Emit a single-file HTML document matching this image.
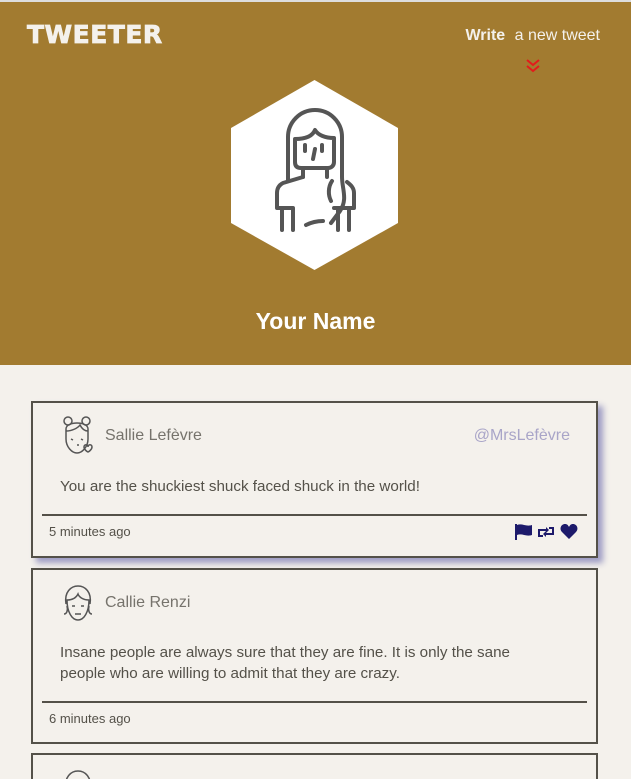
<!DOCTYPE html>
<html><head><style>
html,body{margin:0;width:631px;height:779px;overflow:hidden}
body{background:#f4f1ec;font-family:"Liberation Sans",sans-serif;color:#545149;position:relative}
.hdr{position:absolute;left:0;top:0;width:631px;height:365px;background:#a27b30;border-top:2px solid #ddd;box-sizing:border-box}
.logo{position:absolute;left:27px;top:18px;font:900 25px "DejaVu Sans",sans-serif;color:#f4f1ec;letter-spacing:0.5px;-webkit-text-stroke:0.8px #f4f1ec}
.write{position:absolute;right:31px;top:25px;font-size:16px;color:#f4f1ec}
.write b{margin-right:5px}
.name{position:absolute;left:0;width:631px;text-align:center;top:308px;font-size:23px;font-weight:bold;color:#fff}
.card{position:absolute;left:31px;width:567px;border:2px solid #545149;box-sizing:border-box;background:#f4f1ec}
.c1{top:401px;height:157px;box-shadow:5px 5px 6px #9d9cc4}
.c2{top:568px;height:176px}
.c3{top:753px;height:40px;border-bottom:none}
.uname{position:absolute;left:72px;top:24px;font-size:16px;color:#76736c}
.handle{position:absolute;right:26px;top:24px;font-size:16px;color:#a9a5c8}
.txt{position:absolute;left:27px;width:495px;font-size:15.2px;line-height:21px;color:#545149}
.line{position:absolute;left:9px;right:9px;height:2px;background:#545149}
.time{position:absolute;left:16px;font-size:13px;color:#545149}
</style></head><body>
<div class="hdr">
<div class="logo">TWEETER</div>
<div class="write"><b>Write</b> a new tweet</div>
<svg style="position:absolute;left:525px;top:56px" width="16" height="16" viewBox="0 0 16 16"><path d="M2 2l6 5 6-5M2 8l6 5 6-5" fill="none" stroke="#e21b1b" stroke-width="2"/></svg>
</div>
<svg style="position:absolute;left:231px;top:77px" width="167" height="196" viewBox="0 0 167 196"><polygon points="83.5,3 167,51 167,146 83.5,193 0,146 0,51" fill="#fff"/>
<g fill="none" stroke="#555" stroke-width="4" stroke-linecap="round" stroke-linejoin="round">
<path d="M57 104V60a27 27 0 0 1 54 0v40c0 12 6 22 -2 34l-9 12"/>
<path d="M101 104c-4 6 -4 14 -1 20"/>
<path d="M64 62c12 0 18-4 20-9 3 5 10 8 19 8V85c0 4-3 6-6 6H70c-4 0-6-2-6-6z"/>
<path d="M74 68v6M91 68v6M84 72l-2 10"/>
<path d="M72 91v9M96 91v9"/>
<path d="M72 100l-20 6c-4 2-6 5-6 10v15h16M51 131v22M62 131v22"/>
<path d="M103 131h20v-15c0-5-3-8-7-11M107 131v22M118 131v22"/>
<path d="M75 148c6-3 12-4 17-4"/>
</g></svg>
<div class="name">Your Name</div>

<div class="card c1">
<svg style="position:absolute;left:27px;top:12px" width="34" height="40" viewBox="0 0 34 40"><g fill="none" stroke="#555" stroke-width="1.5"><circle cx="8" cy="6" r="4"/><circle cx="26" cy="6" r="4"/><path d="M6 14c0-8 22-8 22 0v10c0 8-6 14-11 14S6 32 6 24z"/><path d="M6 16c6 0 12-3 14-6 2 4 5 6 8 6M11 24l2 1M21 24l2 1M17 30h2"/><path d="M24 32c0-3 4-3 4 0 0-3 4-3 4 0 0 3-4 5-4 5s-4-2-4-5z"/></g></svg>
<div class="uname">Sallie Lefèvre</div>
<div class="handle">@MrsLefèvre</div>
<div class="txt" style="top:73px">You are the shuckiest shuck faced shuck in the world!</div>
<div class="line" style="top:111px"></div>
<div class="time" style="top:121px">5 minutes ago</div>
<svg style="position:absolute;left:481px;top:120px" width="66" height="18" viewBox="0 0 66 18"><g fill="#1d1a6b"><rect x="1" y="1" width="2" height="16"/><path d="M3 2c5-2 9 2 15 0v10c-6 2-10-2-15 0z"/>
<path d="M24 6h8v-2l3 3-3 3v-2h-6v4h3v2h-5zM40 12h-8v2l-3-3 3-3v2h6V6h-3V4h5z"/>
<path d="M55 16l-7-7c-3-3-1-8 3-8 2 0 3 1 4 3 1-2 2-3 4-3 4 0 6 5 3 8z"/></g></svg>
</div>

<div class="card c2">
<svg style="position:absolute;left:28px;top:14px" width="34" height="38" viewBox="0 0 34 38"><g fill="none" stroke="#555" stroke-width="1.5"><path d="M5 20C3 8 10 2 17 2s14 6 12 18"/><path d="M6 16c0 12 5 20 11 20s11-8 11-20c-6 0-10-3-11-6-2 4-6 6-11 6z"/><path d="M11 22h3M20 22h3M14 30h6M3 30c3 0 4-4 3-8M31 30c-3 0-4-4-3-8"/></g></svg>
<div class="uname">Callie Renzi</div>
<div class="txt" style="top:72px">Insane people are always sure that they are fine. It is only the sane<br>people who are willing to admit that they are crazy.</div>
<div class="line" style="top:131px"></div>
<div class="time" style="top:141px">6 minutes ago</div>
</div>

<div class="card c3">
<svg style="position:absolute;left:28px;top:14px" width="34" height="38" viewBox="0 0 34 38"><path d="M5 20C3 8 10 2 17 2s14 6 12 18" fill="none" stroke="#555" stroke-width="1.5"/></svg>
</div>
</body></html>
